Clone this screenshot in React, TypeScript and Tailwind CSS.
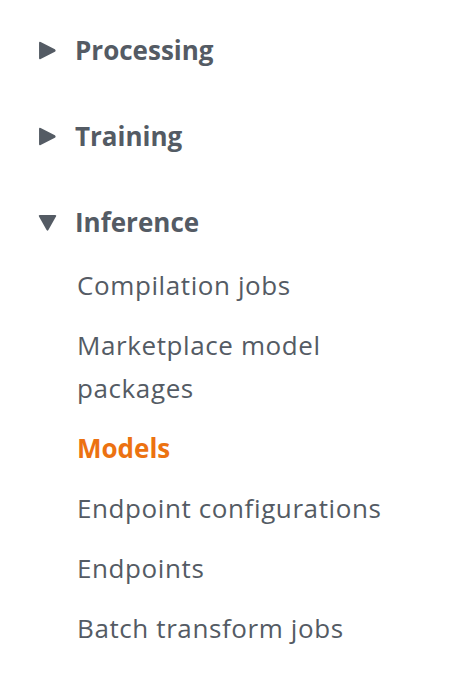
import React from "react";

const SECTIONS = [
  { label: "Processing", open: false },
  { label: "Training", open: false },
  { label: "Inference", open: true },
];

const INFERENCE_LINKS = [
  { label: "Compilation jobs", active: false },
  { label: "Marketplace model packages", active: false },
  { label: "Models", active: true },
  { label: "Endpoint configurations", active: false },
  { label: "Endpoints", active: false },
  { label: "Batch transform jobs", active: false },
];

function Caret({ open }: { open: boolean }) {
  return (
    <span className="w-[20px] h-[20px] flex items-center justify-center shrink-0">
      {open ? (
        <svg width="19" height="16" viewBox="0 0 19 16">
          <path d="M1 1.5 Q0.2 0 2 0 H17 Q18.8 0 18 1.5 L10.4 15 Q9.5 16.4 8.6 15 Z" fill="#545b64" />
        </svg>
      ) : (
        <svg width="17" height="19" viewBox="0 0 16 18">
          <path d="M1.5 1 Q0 0.2 0 2 V16 Q0 17.8 1.5 17 L15 10.2 Q16.4 9 15 7.8 Z" fill="#545b64" />
        </svg>
      )}
    </span>
  );
}

export default function App() {
  return (
    <div
      className="w-[460px] h-[692px] bg-white pt-[29px] pl-[37px] text-[#545b64] text-[26px] leading-[43px]"
      style={{ fontFamily: '"Open Sans", "Noto Sans", sans-serif' }}
    >
      <nav className="flex flex-col gap-[43px]">
        {SECTIONS.map((s) => (
          <div key={s.label}>
            <div className="flex items-center gap-[18px] font-bold cursor-pointer">
              <Caret open={s.open} />
              <span>{s.label}</span>
            </div>
            {s.open && (
              <ul className="mt-[20px] ml-[40px] flex flex-col gap-[17px] w-[330px]">
                {INFERENCE_LINKS.map((l) => (
                  <li
                    key={l.label}
                    className={l.active ? "font-bold text-[#ec7211]" : "tracking-[0.6px]"}
                  >
                    {l.label}
                  </li>
                ))}
              </ul>
            )}
          </div>
        ))}
      </nav>
    </div>
  );
}
